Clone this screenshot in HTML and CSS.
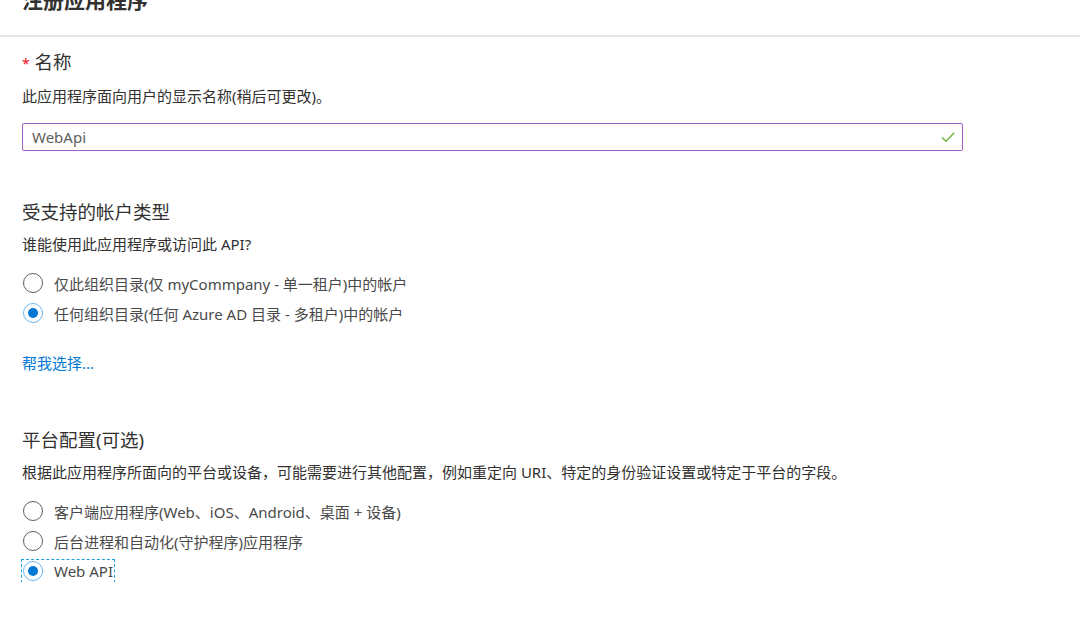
FILE: index.html
```html
<!DOCTYPE html>
<html lang="zh-CN">
  <head>
    <meta charset="UTF-8" />
    <title>注册应用程序</title>
    <link rel="stylesheet" href="styles.css">
  </head>
  <body>
    <!-- En-tête -->
    <div class="header">
      <h1 class="title">注册应用程序</h1>
    </div>

    <div class="content">
      <!-- Nom -->
      <div class="section first">
        <div class="label"><span class="req">*</span> 名称</div>
        <div class="desc">此应用程序面向用户的显示名称(稍后可更改)。</div>
        <div class="input">
          <span>WebApi</span>
          <svg class="check" width="16" height="16" viewBox="0 0 16 16">
            <path d="M2 8.5 L6 12.2 L14.2 3.8" fill="none" stroke="#6bb33f" stroke-width="1.4" />
          </svg>
        </div>
      </div>

      <!-- Types de comptes -->
      <div class="section">
        <div class="label">受支持的帐户类型</div>
        <div class="desc">谁能使用此应用程序或访问此 API?</div>
        <div class="radios">
          <div class="radio"><span class="dot"></span>仅此组织目录(仅 myCommpany - 单一租户)中的帐户</div>
          <div class="radio checked"><span class="dot"></span>任何组织目录(任何 Azure AD 目录 - 多租户)中的帐户</div>
        </div>
        <a class="link" href="#">帮我选择...</a>
      </div>

      <!-- Plateforme -->
      <div class="section last">
        <div class="label">平台配置(可选)</div>
        <div class="desc">根据此应用程序所面向的平台或设备，可能需要进行其他配置，例如重定向 URI、特定的身份验证设置或特定于平台的字段。</div>
        <div class="radios">
          <div class="radio"><span class="dot"></span>客户端应用程序(Web、iOS、Android、桌面 + 设备)</div>
          <div class="radio"><span class="dot"></span>后台进程和自动化(守护程序)应用程序</div>
          <div class="radio checked focus"><span class="dot"></span>Web API</div>
        </div>
      </div>
    </div>
  </body>
</html>
```

FILE: styles.css
```css
body {
  margin: 0;
  background: #fff;
  color: #323130;
  font-family: "Segoe UI", "Noto Sans", "Noto Sans CJK SC", sans-serif;
  overflow: hidden;
}
.header {
  display: flow-root;
  height: 35px;
  border-bottom: 2px solid #e6e6e6;
}
.title {
  margin: -14px 0 0 22px;
  font-size: 21px;
  line-height: 28px;
  font-weight: bold;
}
.content {
  padding-left: 22px;
}
.section {
  margin-top: 49px;
}
.section.first {
  margin-top: 13px;
}
.section.last {
  margin-top: 54px;
}
.label {
  font-size: 18.5px;
  line-height: 24px;
}
.req {
  color: #e81123;
  font-size: 14px;
}
.desc {
  font-size: 15px;
  line-height: 20px;
  margin-top: 10px;
}
.input {
  width: 924px;
  height: 26px;
  margin-top: 17px;
  border: 1px solid #a15fc0;
  border-radius: 2px;
  display: flex;
  align-items: center;
  justify-content: space-between;
  padding: 0 6px 0 9px;
  font-size: 15px;
  color: #605e5c;
}
.radios {
  margin-top: 18px;
  display: flex;
  flex-direction: column;
  gap: 8px;
}
.radio {
  display: flex;
  align-items: center;
  gap: 11px;
  height: 22px;
  font-size: 15px;
  color: #4a4a4a;
  align-self: flex-start;
}
.dot {
  width: 18px;
  height: 18px;
  border: 1px solid #605e5c;
  border-radius: 50%;
  margin-left: 1px;
  display: flex;
  align-items: center;
  justify-content: center;
}
.checked .dot {
  border-color: #6cb6f0;
}
.checked .dot::after {
  content: "";
  width: 10px;
  height: 10px;
  border-radius: 50%;
  background: #0078d4;
}
.focus {
  outline: 1px dashed #1fa0e0;
  padding-right: 1px;
}
.link {
  display: inline-block;
  margin-top: 28px;
  font-size: 15px;
  color: #0078d4;
  text-decoration: none;
}
```
